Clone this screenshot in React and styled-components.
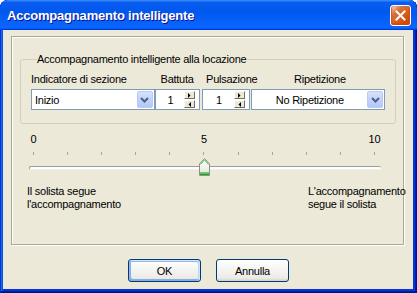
import React from "react";
import styled, { createGlobalStyle } from "styled-components";

const Global = createGlobalStyle`
  html, body { margin: 0; padding: 0; background: #ffffff; }
  body { font-family: "Liberation Sans", Arial, sans-serif; font-size: 11px; letter-spacing: -0.25px; color: #000; }
  * { box-sizing: border-box; }
`;

const Window = styled.div`
  width: 417px;
  height: 293px;
  display: flex;
  flex-direction: column;
  background: #0831d9;
  border-radius: 8px 8px 0 0;
  box-shadow: inset -1px -1px #00138c, inset 1px 1px #0831d9, inset -2px -2px #001ea0,
    inset 2px 2px #166aee, inset -3px -3px #003bda, inset 3px 3px #0855dd;
  overflow: hidden;
`;

const TitleBar = styled.div`
  height: 30px;
  flex: none;
  display: flex;
  align-items: center;
  justify-content: space-between;
  padding: 0 6px 0 7px;
  border-radius: 8px 8px 0 0;
  background: linear-gradient(180deg, #3a93ff, #0a5cf0 8%, #0058ee 40%, #0a66ff 88%, #0a66ff 93%, #005bff 95%, #003dd7 96%, #003dd7);
`;

const Title = styled.span`
  font-family: "Liberation Sans", Arial, sans-serif;
  font-weight: bold;
  font-size: 13px;
  color: #fff;
  text-shadow: 1px 1px #0f1089;
  letter-spacing: -0.2px;
  padding-top: 1px;
`;

const CloseButton = styled.div`
  width: 21px;
  height: 21px;
  border: 1px solid #fff;
  border-radius: 3px;
  display: flex;
  align-items: center;
  justify-content: center;
  background: radial-gradient(circle at 90% 90%, #cc4600 0%, #dc6527 55%, #cd7546 70%, #ffccb2 90%, #fff 100%);
  box-shadow: inset 0 -1px 2px 1px #da4600;
`;

const Body = styled.div`
  flex: 1;
  margin: 0 4px 4px 3px;
  background: #ece9d8;
  padding: 6px 9px 0 8px;
  display: flex;
  flex-direction: column;
`;

const Panel = styled.div`
  height: 209px;
  border: 1px solid #aca899;
  box-shadow: 1px 1px 0 #fff, inset 1px 1px 0 #fff;
  display: flex;
  flex-direction: column;
`;

const GroupBox = styled.fieldset`
  margin: 16px 7px 0 8px;
  padding: 7px 10px 13px 10px;
  border: 1px solid #d0d0bf;
  border-radius: 3px;
  min-width: 0;
`;

const Legend = styled.legend`
  padding: 0 1px 0 0;
  margin-left: 6px;
  line-height: 13px;
`;

const Row = styled.div`
  display: flex;
  align-items: ${(p) => (p.$labels ? "flex-end" : "stretch")};
  height: ${(p) => (p.$labels ? "13px" : "21px")};
  margin-bottom: ${(p) => (p.$labels ? "3px" : "0")};
`;

const Label = styled.div`
  width: ${(p) => p.$w}px;
  margin-left: ${(p) => p.$ml || 0}px;
  padding-left: ${(p) => p.$pl || 0}px;
  line-height: 13px;
  white-space: nowrap;
`;

const Combo = styled.div`
  width: ${(p) => p.$w}px;
  margin-left: ${(p) => p.$ml || 0}px;
  height: 21px;
  border: 1px solid #7f9db9;
  background: #fff;
  display: flex;
  align-items: stretch;
  padding: 1px;
`;

const ComboText = styled.div`
  flex: 1;
  display: flex;
  align-items: center;
  justify-content: ${(p) => (p.$center ? "center" : "flex-start")};
  padding-left: ${(p) => (p.$center ? "0" : "2px")};
  padding-top: 1px;
`;

const DropButton = styled.div`
  width: 16px;
  border: 1px solid #bbcbf0;
  border-radius: 2px;
  background: linear-gradient(180deg, #d6e2fd, #c1d3fb 50%, #b3c8f7);
  display: flex;
  align-items: center;
  justify-content: center;
`;

const Spin = styled.div`
  width: ${(p) => p.$w}px;
  margin-left: ${(p) => p.$ml || 0}px;
  height: 21px;
  border: 1px solid #7f9db9;
  background: #fff;
  display: flex;
  align-items: center;
  padding: 0 4px 0 1px;
`;

const SpinText = styled.div`
  flex: 1;
  text-align: center;
  padding-top: 1px;
`;

const SpinButtons = styled.div`
  width: 11px;
  height: 17px;
  display: flex;
  flex-direction: column;
  gap: 1px;
`;

const SpinBtn = styled.div`
  flex: 1;
  background: #ece9d8;
  border-top: 1px solid #fff;
  border-left: 1px solid #fff;
  border-right: 1px solid #716f64;
  border-bottom: 1px solid #716f64;
  display: flex;
  align-items: center;
  justify-content: center;
`;

const SliderBlock = styled.div`
  margin: 9px 0 0 17px;
  width: 352px;
  display: flex;
  flex-direction: column;
`;

const Scale = styled.div`
  display: flex;
  justify-content: space-between;
  padding: 0 6px 0 4px;
  height: ${(p) => p.$h}px;
  margin-bottom: ${(p) => p.$mb || 0}px;
`;

const ScaleNum = styled.div`
  width: 1px;
  display: flex;
  justify-content: center;
  line-height: 13px;
  white-space: nowrap;
`;

const Tick = styled.div`
  width: 1px;
  height: 3px;
  background: #a7a69b;
`;

const TrackArea = styled.div`
  position: relative;
  height: 24px;
  display: flex;
  align-items: center;
`;

const Track = styled.div`
  width: 100%;
  height: 4px;
  border-radius: 2px;
  border-top: 1px solid #9d9c99;
  border-left: 1px solid #9d9c99;
  border-bottom: 1px solid #f0f0ee;
  background: #fff;
  margin-top: 1px;
`;

const Thumb = styled.div`
  position: absolute;
  top: 3px;
  width: 11px;
  height: 18px;
  display: flex;
`;

const Captions = styled.div`
  display: grid;
  grid-template-columns: 281px auto;
  margin: 6px 0 0 15px;
  line-height: 13px;
  white-space: nowrap;
`;

const Buttons = styled.div`
  display: flex;
  justify-content: center;
  gap: 15px;
  margin: 14px 0 0 -11px;
  width: 417px;
`;

const Button = styled.div`
  width: 73px;
  height: 23px;
  border: 1px solid #003c74;
  border-radius: 3px;
  background: linear-gradient(180deg, #fff, #ecebe6 86%, #d6d0c5);
  display: flex;
  align-items: center;
  justify-content: center;
  box-shadow: ${(p) =>
    p.$default
      ? "inset -1px 1px #cee7ff, inset 1px 2px #98b8ea, inset -2px 2px #bcd4f6, inset 1px -1px #89ade4, inset 2px -2px #89ade4"
      : "none"};
`;

const Chevron = () => (
  <svg width="9" height="6" viewBox="0 0 9 6">
    <path d="M1 1 L4.5 4.5 L8 1" fill="none" stroke="#4d6185" strokeWidth="2" />
  </svg>
);

const SpinArrow = ({ dir }) => (
  <svg width="3" height="5" viewBox="0 0 3 5">
    {dir === "up" ? <path d="M0 0 L0 5 L2.5 2.5 Z" fill="#000" /> : <path d="M3 0 L3 5 L0.5 2.5 Z" fill="#000" />}
  </svg>
);

const ThumbShape = () => (
  <svg width="11" height="18" viewBox="0 0 11 18">
    <defs>
      <linearGradient id="tg" x1="0" y1="0" x2="0" y2="1">
        <stop offset="0" stopColor="#ffffff" />
        <stop offset="1" stopColor="#e4e3dc" />
      </linearGradient>
    </defs>
    <path d="M0.5 6 L5.5 0.5 L10.5 6 L10.5 17.5 L0.5 17.5 Z" fill="url(#tg)" stroke="#8e8f8f" />
    <path d="M1.5 6.3 L5.5 1.8 L9.5 6.3" fill="none" stroke="#3bb43b" strokeWidth="1" />
    <rect x="1" y="14" width="9" height="1.5" fill="#5fd35f" />
    <rect x="1" y="15.5" width="9" height="1.5" fill="#21a121" />
  </svg>
);

const CloseX = () => (
  <svg width="11" height="11" viewBox="0 0 11 11">
    <path d="M1.5 1.5 L9.5 9.5 M9.5 1.5 L1.5 9.5" stroke="#fff" strokeWidth="2" strokeLinecap="square" />
  </svg>
);

const SpinControl = ({ w, ml, value }) => (
  <Spin $w={w} $ml={ml}>
    <SpinText>{value}</SpinText>
    <SpinButtons>
      <SpinBtn>
        <SpinArrow dir="up" />
      </SpinBtn>
      <SpinBtn>
        <SpinArrow dir="down" />
      </SpinBtn>
    </SpinButtons>
  </Spin>
);

export default function App() {
  const ticks = Array.from({ length: 11 });
  return (
    <>
      <Global />
      <Window>
        <TitleBar>
          <Title>Accompagnamento intelligente</Title>
          <CloseButton>
            <CloseX />
          </CloseButton>
        </TitleBar>
        <Body>
          <Panel>
            <GroupBox>
              <Legend>Accompagnamento intelligente alla locazione</Legend>
              <Row $labels>
                <Label $w={125}>Indicatore di sezione</Label>
                <Label $w={46} $pl={6}>Battuta</Label>
                <Label $w={50} $pl={6}>Pulsazione</Label>
                <Label $w={136} $pl={44}>Ripetizione</Label>
              </Row>
              <Row>
                <Combo $w={125}>
                  <ComboText>Inizio</ComboText>
                  <DropButton>
                    <Chevron />
                  </DropButton>
                </Combo>
                <SpinControl w={46} value="1" />
                <SpinControl w={48} ml={2} value="1" />
                <Combo $w={136} $ml={1}>
                  <ComboText $center>No Ripetizione</ComboText>
                  <DropButton>
                    <Chevron />
                  </DropButton>
                </Combo>
              </Row>
            </GroupBox>
            <SliderBlock>
              <Scale $h={13} $mb={6}>
                {ticks.map((_, i) => (
                  <ScaleNum key={i}>{i === 0 ? "0" : i === 5 ? "5" : i === 10 ? "10" : ""}</ScaleNum>
                ))}
              </Scale>
              <Scale $h={3}>
                {ticks.map((_, i) => (
                  <Tick key={i} />
                ))}
              </Scale>
              <TrackArea>
                <Track />
                <Thumb style={{ left: `calc(4px + ${0.5} * (100% - 10px) - 5px)` }}>
                  <ThumbShape />
                </Thumb>
              </TrackArea>
            </SliderBlock>
            <Captions>
              <div>
                Il solista segue
                <br />
                l'accompagnamento
              </div>
              <div>
                L'accompagnamento
                <br />
                segue il solista
              </div>
            </Captions>
          </Panel>
          <Buttons>
            <Button $default>OK</Button>
            <Button>Annulla</Button>
          </Buttons>
        </Body>
      </Window>
    </>
  );
}
